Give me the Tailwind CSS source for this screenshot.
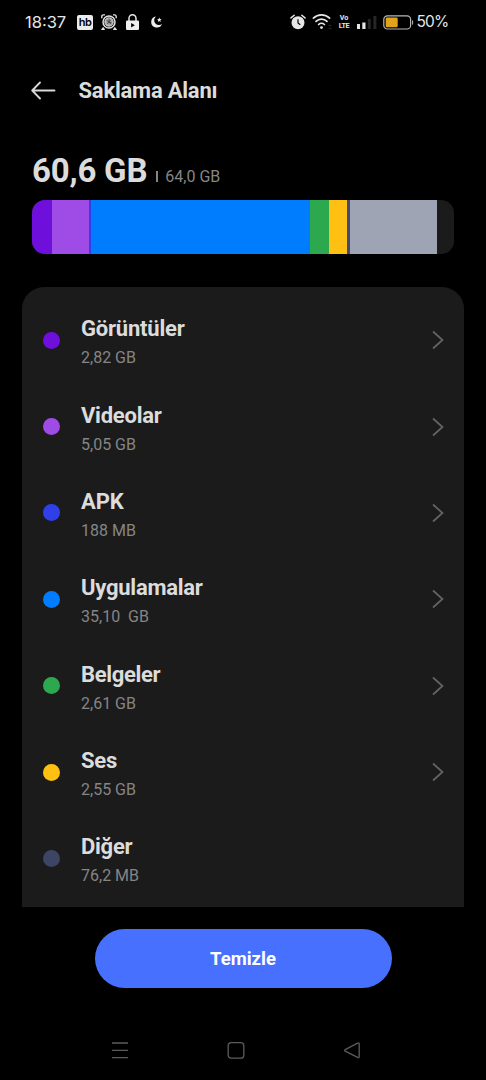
<!DOCTYPE html>
<html lang="tr">
<head>
<meta charset="utf-8">
<meta name="viewport" content="width=device-width, initial-scale=1">
<title>Saklama Alanı</title>
<script src="https://cdn.jsdelivr.net/npm/@tailwindcss/browser@4"></script>
</head>
<body class="bg-black">
<div class="flex h-[1080px] w-[486px] flex-col overflow-hidden bg-black font-['Roboto',sans-serif] text-[#dcdcdc]">

  <!-- Status bar -->
  <header class="flex h-11 shrink-0 items-center pl-[25px] font-['Inter',sans-serif] text-[#e6e6e6]">
    <span class="w-[52px] text-[16.5px] leading-none">18:37</span>
    <span class="flex h-[15px] w-4 items-center justify-center rounded-[2px] bg-[#ececec] text-[11px] leading-none font-semibold tracking-[-0.5px] text-black">hb</span>
    <svg class="ml-2 size-4" viewBox="0 0 16 16" fill="none" stroke="#e2e2e2">
      <circle cx="8" cy="8" r="6" stroke-width="1.5"/>
      <circle cx="8" cy="8" r="4.2" fill="#a8a8a8" stroke-width=".9"/>
      <path d="M.8 4.2V2.5Q.8.9 2.5.9H4M12 .9h1.5q1.7 0 1.7 1.6v1.7M2.6 13.5l-1.3 1.7h2.5M13.4 13.5l1.3 1.7h-2.5" stroke-width="1.4"/>
      <path d="M5.5 6.2l4.8 3.9M6.2 10l3.6-4.3M8 4.5v3.7l2.5.4" stroke="#333" stroke-width=".8"/>
    </svg>
    <svg class="ml-2 h-[18px] w-[15px]" viewBox="0 0 15 18">
      <path d="M4 8V5.2a3.5 3.5 0 0 1 7 0V8" fill="none" stroke="#e6e6e6" stroke-width="1.5"/>
      <rect x="1" y="7.4" width="13" height="9.6" rx="1.2" fill="#f0f0f0"/>
      <path d="M6.1 10v4.6l3.8-2.3z" fill="#000"/>
    </svg>
    <svg class="ml-[10px] h-[14px] w-[13px]" viewBox="0 0 13 14">
      <path d="M6 1.4A5.6 5.6 0 1 0 12 9 4.4 4.4 0 0 1 6 1.4z" fill="#ececec"/>
      <path d="M9.4 2.5l.6 1.5 1.6.2-1.2 1.1.3 1.6-1.4-.8-1.4.8.3-1.6L7 4.2l1.7-.2z" fill="#ececec"/>
    </svg>
    <svg class="ml-[126.5px] h-4 w-[16px]" viewBox="0 0 16 16">
      <circle cx="8" cy="8.7" r="6.5" fill="#e6e6e6"/>
      <path d="M1 3.9L4.2 1.2M15 3.9L11.8 1.2" stroke="#e6e6e6" stroke-width="1.5" stroke-linecap="round"/>
      <path d="M8 5.2V9l2.3 1.8" fill="none" stroke="#000" stroke-width="1.2"/>
    </svg>
    <svg class="ml-[6px] h-4 w-5" viewBox="0 0 20 16" fill="none" stroke="#e6e6e6" stroke-width="1.7" stroke-linecap="round">
      <path d="M1.4 4.2a11.5 11.5 0 0 1 16.2 0M4 7.4a7.7 7.7 0 0 1 11 0M6.6 10.5a4.2 4.2 0 0 1 5.8 0"/>
      <circle cx="9.5" cy="13.6" r="1.4" fill="#e6e6e6" stroke="none"/>
      <path d="M17 11.5h2M17 14.5h2" stroke="#202020" stroke-width="1.3"/>
    </svg>
    <span class="ml-[6px] flex w-[12px] scale-x-90 flex-col items-center font-['Roboto',sans-serif] text-[8px] font-bold"><span class="leading-[8px]">Vo</span><span class="leading-[8px] tracking-[-0.4px]">LTE</span></span>
    <svg class="ml-[7.5px] h-[14px] w-5" viewBox="0 0 20 14">
      <path d="M0 9h3v5H0zM5.3 7.4h3.2V14H5.3z" fill="#e6e6e6"/>
      <path d="M10.8 4h3v10h-3zM16.4 1h3v13h-3z" fill="#262626"/>
    </svg>
    <svg class="ml-[6px] h-[15px] w-[31px]" viewBox="0 0 31 15">
      <rect x=".8" y=".8" width="26.8" height="13.2" rx="3.6" fill="none" stroke="#b6b6b6" stroke-width="1.2"/>
      <rect x="2.7" y="2.5" width="12" height="9.8" rx="1.3" fill="#e0a31a"/>
      <path d="M29 5q1.2.4 1.2 2.5T29 10z" fill="#aaa"/>
    </svg>
    <span class="ml-[2.5px] text-[15.5px] leading-none tracking-[-0.8px]">50%</span>
  </header>

  <!-- Title bar -->
  <div class="flex h-[92px] shrink-0 items-center pl-[31px]">
    <svg class="h-5 w-[25px]" viewBox="0 0 25 20" fill="none" stroke="#d8d8d8" stroke-width="1.8" stroke-linecap="round" stroke-linejoin="round">
      <path d="M23.5 10.5H1.2M9 2.5L1.2 10.5 9 18.5"/>
    </svg>
    <h1 class="ml-[22.5px] pt-[2px] text-[22px] leading-none font-bold tracking-[-0.22px]">Saklama Alanı</h1>
  </div>

  <!-- Usage summary -->
  <section class="h-[151px] shrink-0 pl-8">
    <div class="flex h-16 items-baseline pt-[18px] leading-none">
      <span class="text-[33px] leading-[34px] font-bold tracking-[-0.2px]">60,6 GB</span>
      <span class="ml-[9px] h-[11px] w-[2px] bg-[#858585]"></span>
      <span class="ml-[7px] text-[16px] text-[#858585]">64,0 GB</span>
    </div>
    <div class="flex h-[54px] w-[422px] overflow-hidden rounded-[13px] bg-[#1b1b1b]">
      <div class="w-[20px] bg-[#6f0fdb]"></div>
      <div class="w-[36.5px] bg-[#9f4be5]"></div>
      <div class="w-[2.5px] bg-[#3040e8]"></div>
      <div class="w-[219px] bg-[#007dff]"></div>
      <div class="w-[19px] bg-[#2ca84f]"></div>
      <div class="w-[18px] bg-[#ffc014]"></div>
      <div class="w-[2.5px] bg-[#454a69]"></div>
      <div class="w-[87.5px] bg-[#9fa4b5]"></div>
    </div>
  </section>

  <!-- Category list -->
  <main class="ml-[22px] h-[620px] w-[442px] shrink-0 overflow-hidden rounded-t-[22px] bg-[#1b1b1b] pt-[10px]">
    <ul>
      <li class="flex h-[86.4px] items-center pl-[21px] pr-5">
        <span class="size-[17px] rounded-full bg-[#6f0fdb]"></span>
        <div class="ml-[21px] flex-1 pt-[6px]"><p class="text-[22px] leading-[30px] font-bold tracking-[-0.2px]">Görüntüler</p><p class="text-[16px] leading-[28px] text-[#858585]">2,82 GB</p></div>
        <svg class="h-5 w-3" viewBox="0 0 12 20" fill="none" stroke="#646464" stroke-width="1.7"><path d="M1 1.5l9.5 8.5L1 18.5"/></svg>
      </li>
      <li class="flex h-[86.4px] items-center pl-[21px] pr-5">
        <span class="size-[17px] rounded-full bg-[#9f4be5]"></span>
        <div class="ml-[21px] flex-1 pt-[6px]"><p class="text-[22px] leading-[30px] font-bold tracking-[-0.25px]">Videolar</p><p class="text-[16px] leading-[28px] text-[#858585]">5,05 GB</p></div>
        <svg class="h-5 w-3" viewBox="0 0 12 20" fill="none" stroke="#646464" stroke-width="1.7"><path d="M1 1.5l9.5 8.5L1 18.5"/></svg>
      </li>
      <li class="flex h-[86.4px] items-center pl-[21px] pr-5">
        <span class="size-[17px] rounded-full bg-[#3040e8]"></span>
        <div class="ml-[21px] flex-1 pt-[6px]"><p class="text-[22px] leading-[30px] font-bold tracking-[-0.1px]">APK</p><p class="text-[16px] leading-[28px] text-[#858585]">188 MB</p></div>
        <svg class="h-5 w-3" viewBox="0 0 12 20" fill="none" stroke="#646464" stroke-width="1.7"><path d="M1 1.5l9.5 8.5L1 18.5"/></svg>
      </li>
      <li class="flex h-[86.4px] items-center pl-[21px] pr-5">
        <span class="size-[17px] rounded-full bg-[#007dff]"></span>
        <div class="ml-[21px] flex-1 pt-[6px]"><p class="text-[22px] leading-[30px] font-bold tracking-[-0.25px]">Uygulamalar</p><p class="text-[16px] leading-[28px] text-[#858585]">35,10&nbsp; GB</p></div>
        <svg class="h-5 w-3" viewBox="0 0 12 20" fill="none" stroke="#646464" stroke-width="1.7"><path d="M1 1.5l9.5 8.5L1 18.5"/></svg>
      </li>
      <li class="flex h-[86.4px] items-center pl-[21px] pr-5">
        <span class="size-[17px] rounded-full bg-[#2ca84f]"></span>
        <div class="ml-[21px] flex-1 pt-[6px]"><p class="text-[22px] leading-[30px] font-bold tracking-[-0.35px]">Belgeler</p><p class="text-[16px] leading-[28px] text-[#858585]">2,61 GB</p></div>
        <svg class="h-5 w-3" viewBox="0 0 12 20" fill="none" stroke="#646464" stroke-width="1.7"><path d="M1 1.5l9.5 8.5L1 18.5"/></svg>
      </li>
      <li class="flex h-[86.4px] items-center pl-[21px] pr-5">
        <span class="size-[17px] rounded-full bg-[#ffc014]"></span>
        <div class="ml-[21px] flex-1 pt-[6px]"><p class="text-[22px] leading-[30px] font-bold tracking-[-0.25px]">Ses</p><p class="text-[16px] leading-[28px] text-[#858585]">2,55 GB</p></div>
        <svg class="h-5 w-3" viewBox="0 0 12 20" fill="none" stroke="#646464" stroke-width="1.7"><path d="M1 1.5l9.5 8.5L1 18.5"/></svg>
      </li>
      <li class="flex h-[86.4px] items-center pl-[21px] pr-5">
        <span class="size-[17px] rounded-full bg-[#3d4565]"></span>
        <div class="ml-[21px] flex-1 pt-[5px]"><p class="text-[22px] leading-[30px] font-bold tracking-[-0.25px]">Diğer</p><p class="text-[16px] leading-[28px] text-[#858585]">76,2 MB</p></div>
      </li>
    </ul>
  </main>

  <div class="flex h-[113px] shrink-0 pt-[22px] pl-[94.5px]">
    <button class="h-[59px] w-[297px] rounded-full bg-[#4870ff] pt-[3px] text-[18.5px] font-bold text-white">Temizle</button>
  </div>

  <!-- System navigation -->
  <nav class="flex h-[60px] items-center pl-[111px]">
    <svg class="h-5 w-[18px]" viewBox="0 0 18 20" stroke="#5c5c5c" stroke-width="1.3"><path d="M1 3h16M1 10.4h16M1 17.7h16"/></svg>
    <svg class="ml-[98px] h-5 w-[18px]" viewBox="0 0 18 20" fill="none" stroke="#5c5c5c" stroke-width="1.3"><rect x="1.2" y="2.7" width="15.6" height="15.5" rx="3"/></svg>
    <svg class="ml-[98px] h-5 w-[18px]" viewBox="0 0 18 20" fill="none" stroke="#5c5c5c" stroke-width="1.3" stroke-linejoin="round"><path d="M2.2 9.6L14.6 3.1Q16.2 2.5 16.2 4v12.6Q16.2 18.2 14.6 17.4L2.2 11.2Q1.2 10.4 2.2 9.6z"/></svg>
  </nav>
</div>
</body>
</html>
